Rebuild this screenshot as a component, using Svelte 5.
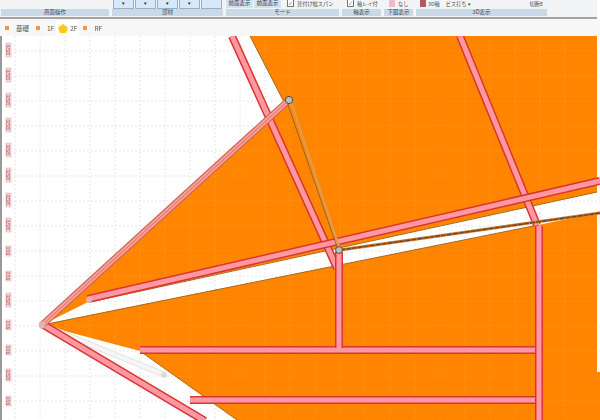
<script lang="ts">
	const xs = Array.from({ length: 23 }, (_, i) => 15 + i * 25);
	const ys = Array.from({ length: 15 }, (_, i) => 51 + i * 25);

	const rulers = [
		[50, 14], [75, 14], [100, 14], [125, 14], [150, 14], [175, 14], [200, 14], [225, 14],
		[251, 10], [276, 10], [300, 14], [325, 10], [350, 10], [375, 12], [401, 10]
	];

	const beams = [
		[232, 36, 337, 268],
		[460, 36, 537, 225],
		[88, 299, 600, 181],
		[42, 324, 205, 421],
		[140, 350, 535, 350],
		[190, 400, 535, 400],
		[339, 252, 339, 348],
		[539, 226, 539, 420]
	];

	const groups = [
		{ label: '画面操作', width: 108 },
		{ label: '部材', width: 111 },
		{ label: 'モード', width: 113 },
		{ label: '軸表示', width: 39 },
		{ label: '下図表示', width: 29 },
		{ label: '3D表示', width: 131 }
	];
</script>

<div class="app">
	<header class="ribbon">
		{#each groups as group}
			<section class="group" style="width: {group.width}px">
				<div class="group-body">
					{#if group.label === '部材'}
						{#each [0, 1, 2, 3, 4] as n}
							<span class="drop">{n < 4 ? '▾' : ''}</span>
						{/each}
					{:else if group.label === 'モード'}
						<span class="mode">前面表示</span>
						<span class="mode">前面表示</span>
						<span class="check">✓</span>
						<span class="text">見付け幅スパン</span>
					{:else if group.label === '軸表示'}
						<span class="check">✓</span>
						<span class="text">軸レイ付</span>
					{:else if group.label === '下図表示'}
						<span class="swatch"></span>
						<span class="text">なし</span>
					{:else if group.label === '3D表示'}
						<span class="cube"></span>
						<span class="text">3D軸</span>
						<span class="text wide">ビス打ち ▾</span>
						<span class="text right">切断E</span>
					{/if}
				</div>
				<div class="group-label">{group.label}</div>
			</section>
		{/each}
	</header>

	<nav class="tabs">
		<span class="dot"></span><span class="tab">基礎</span>
		<span class="dot"></span><span class="tab">1F</span>
		<span class="tab current">
			<svg width="10" height="9" viewBox="0 0 11 10"><path d="M5.5 0 L11 4 L9 10 L2 10 L0 4 Z" fill="#ffc81e" /></svg>
			2F
		</span>
		<span class="dot"></span><span class="tab">RF</span>
	</nav>

	<main class="canvas">
		<svg width="600" height="384" viewBox="0 36 600 384">
			{#each xs as x}
				<line class="grid" x1={x} y1="36" x2={x} y2="420" />
			{/each}
			{#each ys as y}
				<line class="grid" x1="15" y1={y} x2="600" y2={y} />
			{/each}

			<polygon class="floor" points="250,36 597,36 597,192 88,302 42,325 285,104" />
			<polygon class="floor" points="42,325 538,225 597,213 597,372 600,372 600,420 237,420 140,351" />

			{#each xs as x}
				<line class="grid-over" x1={x} y1="36" x2={x} y2="420" />
			{/each}
			{#each ys as y}
				<line class="grid-over" x1="15" y1={y} x2="600" y2={y} />
			{/each}

			{#each rulers as [y, h]}
				<g>
					<rect class="tick" x="6" y={y - h / 2} width="5" height={h} />
					<text class="tick-text" transform="translate(10.2 {y}) rotate(-90)">{h > 10 ? '1820' : '910'}</text>
				</g>
			{/each}

			<line class="ghost-edge" x1="42" y1="325" x2="165" y2="375" />
			<line class="ghost" x1="42" y1="325" x2="165" y2="375" />
			<circle class="ghost-node" cx="164" cy="375" r="3" />

			<line class="edge" x1="42" y1="325" x2="538" y2="225" />
			<line class="edge" x1="90" y1="302" x2="597" y2="192" />
			<line class="edge" x1="140" y1="351" x2="237" y2="420" />
			<line class="edge" x1="250" y1="36" x2="285" y2="104" />

			{#each beams as [x1, y1, x2, y2]}
				<line class="beam-edge" {x1} {y1} {x2} {y2} />
				<line class="beam" {x1} {y1} {x2} {y2} />
			{/each}

			<line class="diag-edge" x1="42" y1="325" x2="289" y2="100" />
			<line class="diag-fill" x1="42" y1="325" x2="289" y2="100" />
			<line class="diag-core" x1="42" y1="325" x2="289" y2="100" />

			<line class="tan" x1="291" y1="102" x2="340" y2="250" />
			<line class="thin" x1="287" y1="102" x2="338" y2="250" />
			<line class="brown-wide" x1="340" y1="250" x2="600" y2="213" />
			<line class="brown" x1="340" y1="250" x2="600" y2="213" />

			<circle class="node" cx="289" cy="100" r="3.6" />
			<circle class="node" cx="339" cy="250" r="3.4" />
			<circle class="node soft" cx="42" cy="325" r="3.4" />
			<circle class="node soft" cx="89" cy="300" r="3" />
		</svg>
	</main>
</div>

<style>
	:global(body) {
		margin: 0;
		background: #fff;
	}

	.app {
		width: 600px;
		height: 420px;
		overflow: hidden;
		display: flex;
		flex-direction: column;
		font-family: "Noto Sans CJK JP", "Liberation Sans", sans-serif;
		color: #555;
		filter: blur(0.35px);
	}

	.ribbon {
		flex: none;
		height: 19px;
		width: 597px;
		box-sizing: border-box;
		display: flex;
		gap: 3px;
		padding-left: 1px;
		background: #f3f4f6;
		border-bottom: 2px solid #a3a3a3;
		overflow: hidden;
	}

	.group {
		flex: none;
		display: flex;
		flex-direction: column;
		height: 16px;
	}

	.group-body {
		flex: none;
		height: 9px;
		display: flex;
		align-items: flex-start;
		overflow: hidden;
		line-height: 8px;
	}

	.group-label {
		flex: none;
		height: 7px;
		line-height: 7px;
		font-size: 5.5px;
		text-align: center;
		background: #c9d9e7;
		color: #3c4650;
		white-space: nowrap;
	}

	.drop {
		flex: none;
		width: 21px;
		height: 9px;
		margin-left: 1px;
		font-size: 5px;
		line-height: 6px;
		text-align: center;
		background: #d8e8f8;
		border: 1px solid #8fb0cf;
		border-top: 0;
		box-sizing: border-box;
		color: #222;
	}

	.mode {
		flex: none;
		width: 27px;
		height: 8px;
		margin-right: 1px;
		font-size: 5.5px;
		line-height: 7px;
		white-space: nowrap;
		background: #d3e3f2;
		color: #333;
		text-align: center;
	}

	.check {
		flex: none;
		width: 7px;
		height: 7px;
		box-sizing: border-box;
		margin: 0 3px 0 5px;
		border: 1px solid #777;
		border-top: 0;
		font-size: 5px;
		line-height: 5px;
		text-align: center;
		background: #fff;
	}

	.text {
		white-space: nowrap;
		font-size: 5.2px;
		line-height: 7px;
		color: #444;
	}

	.wide {
		margin-left: 6px;
	}

	.right {
		margin-left: auto;
		margin-right: 4px;
	}

	.swatch {
		flex: none;
		width: 6px;
		height: 7px;
		margin: 0 3px 0 5px;
		background: #f7b7cf;
	}

	.cube {
		flex: none;
		width: 5px;
		height: 7px;
		margin: 0 2px 0 4px;
		background: #b5555f;
		border-right: 1px solid #7a7a7a;
	}

	.tabs {
		flex: none;
		height: 17px;
		box-sizing: border-box;
		padding: 1px 0 0 5px;
		display: flex;
		align-items: center;
		background: #f7f7f7;
		font-size: 6.5px;
	}

	.dot {
		flex: none;
		width: 4px;
		height: 4px;
		background: #f0924a;
	}

	.tab {
		padding: 0 7px;
		color: #555;
	}

	.tab.current {
		display: flex;
		align-items: center;
		gap: 2px;
		height: 16px;
		padding: 0 2px;
		background: #fff;
		margin-left: -5px;
		margin-right: 4px;
	}

	.canvas {
		flex: 1;
		min-height: 0;
		background: #fff;
		border-left: 2px solid #999;
	}

	.canvas svg {
		display: block;
		margin-left: -2px;
	}

	.floor {
		fill: #ff8500;
	}

	.grid {
		stroke: #e6e6e6;
		stroke-width: 1;
		stroke-dasharray: 2 2;
	}

	.grid-over {
		stroke: #fff;
		stroke-opacity: 0.12;
		stroke-width: 1;
		stroke-dasharray: 2 2;
	}

	.tick {
		fill: #f6dedd;
		stroke: #d9a5a5;
		stroke-width: 0.5;
	}

	.tick-text {
		font-family: "Liberation Sans", sans-serif;
		font-size: 5px;
		text-anchor: middle;
		fill: #a8444c;
	}

	.edge {
		stroke: #a9661c;
		stroke-width: 1;
	}

	.beam-edge {
		stroke: #d8362f;
		stroke-width: 8;
	}

	.beam {
		stroke: #ff98a2;
		stroke-width: 5;
	}

	.diag-edge {
		stroke: #c96a55;
		stroke-width: 7;
	}

	.diag-fill {
		stroke: #ff9d9a;
		stroke-width: 4.5;
	}

	.diag-core {
		stroke: #d9765f;
		stroke-width: 1;
	}

	.tan {
		stroke: #e09a4a;
		stroke-width: 2.5;
	}

	.thin {
		stroke: #8a5a2a;
		stroke-width: 0.8;
	}

	.brown-wide {
		stroke: #c97a2a;
		stroke-width: 3;
	}

	.brown {
		stroke: #6e4526;
		stroke-width: 1.4;
		stroke-dasharray: 5 1;
	}

	.ghost-edge {
		stroke: #e4e4e4;
		stroke-width: 6;
	}

	.ghost {
		stroke: #f6f6f6;
		stroke-width: 4;
	}

	.ghost-node {
		fill: #dcdcdc;
	}

	.node {
		fill: #c8c0c0;
		stroke: #4d4d3f;
		stroke-width: 1;
	}

	.node.soft {
		fill: #e0b5b0;
		stroke: none;
	}
</style>
